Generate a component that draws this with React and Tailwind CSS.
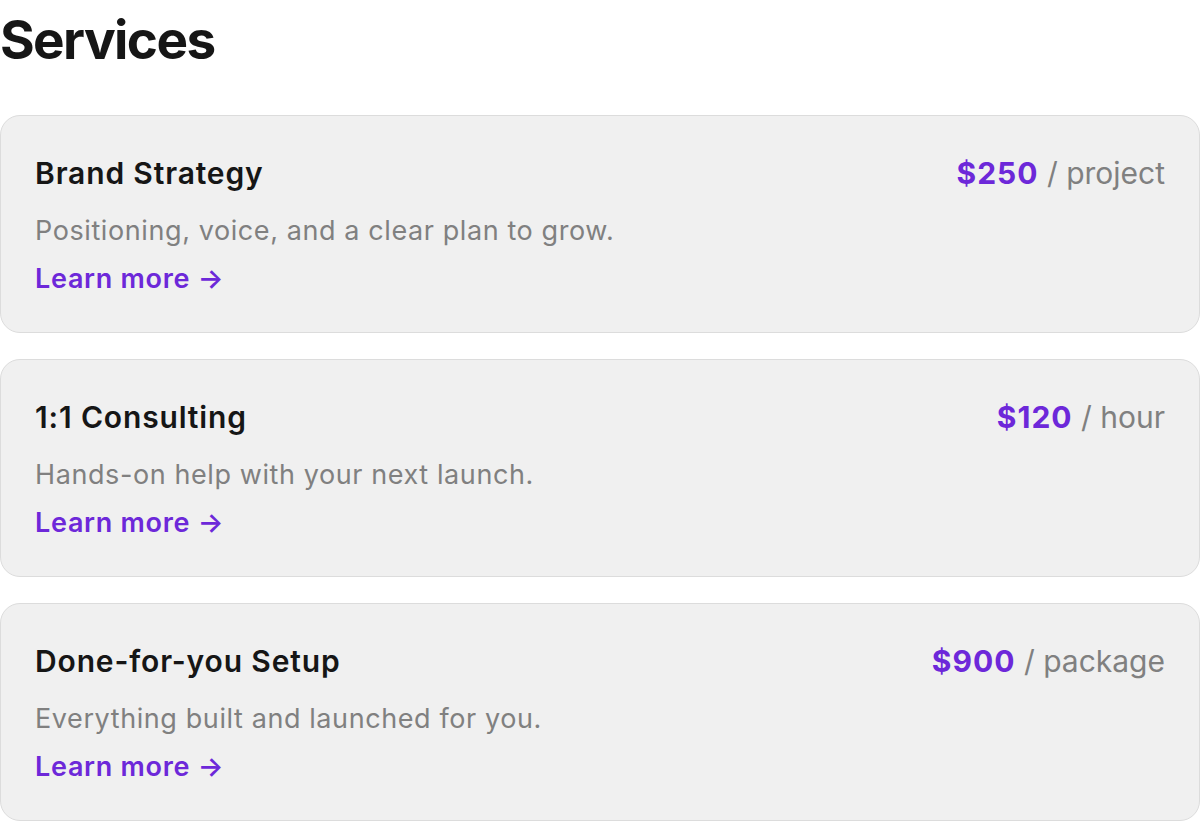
import React from "react";

const services = [
  { title: "Brand Strategy", desc: "Positioning, voice, and a clear plan to grow.", price: "$250", unit: "project" },
  { title: "1:1 Consulting", desc: "Hands-on help with your next launch.", price: "$120", unit: "hour" },
  { title: "Done-for-you Setup", desc: "Everything built and launched for you.", price: "$900", unit: "package" },
];

export default function App() {
  return (
    <div className="bg-white min-h-screen" style={{ fontFamily: "Inter, 'Noto Sans', sans-serif" }}>
      <h1 className="text-[53px] leading-[64px] font-bold tracking-[-1.6px] text-[#161616] pt-[8px]">Services</h1>
      <div className="mt-[43px] flex flex-col gap-[26px]">
        {services.map((s) => (
          <div key={s.title} className="bg-[#f0f0f0] border border-[#dcdcdc] rounded-[20px] px-[34px] pt-[37px] pb-[33px]">
            <div className="flex items-baseline justify-between">
              <div className="text-[30px] leading-[40px] font-semibold tracking-[0.85px] text-[#161616]">{s.title}</div>
              <div className="text-[30px] leading-[40px]">
                <span className="font-bold tracking-[1px] text-[#6d28d9]">{s.price}</span>
                <span className="text-[#808080]"> / {s.unit}</span>
              </div>
            </div>
            <div className="mt-[18px] text-[27px] leading-[40px] tracking-[0.59px] text-[#808080]">{s.desc}</div>
            <div className="mt-[8px] text-[27px] leading-[40px] font-semibold tracking-[0.7px] text-[#6d28d9]">Learn more →</div>
          </div>
        ))}
      </div>
    </div>
  );
}
